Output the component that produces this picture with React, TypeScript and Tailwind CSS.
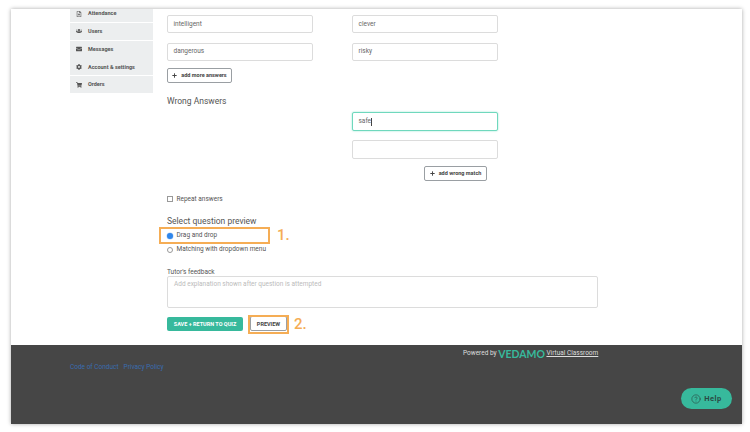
import React from 'react';
import { FaRegFileAlt, FaUsers, FaEnvelope, FaCog, FaShoppingCart, FaPlus } from 'react-icons/fa';
import { CircleHelp } from 'lucide-react';

const navItems = [
  { label: 'Attendance', icon: FaRegFileAlt },
  { label: 'Users', icon: FaUsers },
  { label: 'Messages', icon: FaEnvelope },
  { label: 'Account & settings', icon: FaCog },
  { label: 'Orders', icon: FaShoppingCart },
];

function Field({ value, active, height = 'h-[18px]' }: { value?: string; active?: boolean; height?: string }) {
  return (
    <div
      className={`w-[146px] ${height} rounded-[2px] border bg-white px-[5.5px] pt-px flex items-center text-[6.5px] text-[#666] ${
        active ? 'border-[#6fd8bd] shadow-[0_0_2px_#8fe3cd]' : 'border-[#dcdcdc]'
      }`}
    >
      {value}
      {active && <span className="w-px h-[8px] bg-[#444]" />}
    </div>
  );
}

function OutlineButton({ label, className }: { label: string; className: string }) {
  return (
    <button className={`flex items-center justify-center gap-[4px] rounded-[2px] border border-[#9a9fa3] bg-white text-[5.5px] font-bold text-[#444] ${className}`}>
      <FaPlus size={5} />
      {label}
    </button>
  );
}

export default function App() {
  return (
    <div className="w-[750px] h-[432px] overflow-hidden bg-white pt-[9px] pl-[11px] font-['Roboto',sans-serif]">
      <div className="relative w-[731px] h-[415px] flex flex-col shadow-[0_0_4px_rgba(0,0,0,0.35)]">
        <main className="h-[336px] bg-white flex pl-[59px] overflow-hidden">
          <aside className="w-[83px] -mt-[4px] flex flex-col gap-[0.75px] self-start">
            {navItems.map(({ label, icon: Icon }) => (
              <div key={label} className="h-[17px] bg-[#eceeef] flex items-center pl-[6px] gap-[6px] text-[5.5px] font-bold text-[#555]">
                <Icon size={6} className="shrink-0" />
                {label}
              </div>
            ))}
          </aside>

          <section className="ml-[14px] w-[431px] pt-[6px] flex flex-col">
            <div className="grid grid-cols-[146px_146px] gap-x-[39px] gap-y-[9.5px]">
              <Field value="intelligent" />
              <Field value="clever" />
              <Field value="dangerous" />
              <Field value="risky" />
            </div>
            <OutlineButton label="add more answers" className="mt-[7px] w-[65px] h-[15px]" />

            <h3 className="mt-[12px] text-[8.5px] leading-[12px] text-[#555]">Wrong Answers</h3>
            <div className="ml-[185px] mt-[5px] flex flex-col gap-[9px]">
              <Field value="safe" active height="h-[19px]" />
              <Field height="h-[19px]" />
            </div>
            <OutlineButton label="add wrong match" className="mt-[7px] ml-[257px] w-[63px] h-[15px]" />

            <label className="mt-[14px] flex items-center gap-[3.5px] text-[6.5px] text-[#555]">
              <span className="w-[6px] h-[6px] border border-[#999] bg-white" />
              Repeat answers
            </label>

            <h3 className="mt-[12px] text-[8.5px] leading-[11px] text-[#555]">Select question preview</h3>
            <div className="mt-[4px] flex items-center gap-[3.5px] h-[10px] text-[6.5px] text-[#555]">
              <span className="w-[6px] h-[6px] -mt-px rounded-full bg-[#2f86eb] shadow-[0_0_0_0.5px_#b9d4f5]" />
              Drag and drop
            </div>
            <div className="mt-[4px] flex items-center gap-[3.5px] h-[10px] text-[6.5px] text-[#555]">
              <span className="w-[6px] h-[6px] -mt-px rounded-full border border-[#999] bg-white" />
              Matching with dropdown menu
            </div>

            <label className="mt-[13px] text-[6.5px] leading-[8px] text-[#555]">Tutor's feedback</label>
            <div className="w-[431px] h-[32px] border border-[#dcdcdc] rounded-[2px] px-[6px] pt-[3px] text-[6.5px] text-[#bbb]">
              Add explanation shown after question is attempted
            </div>

            <div className="mt-[8px] flex items-center gap-[7px]">
              <button className="w-[76px] h-[14.5px] rounded-[2px] bg-[#37b99c] text-white text-[5.5px] font-bold">SAVE + RETURN TO QUIZ</button>
              <button className="w-[37px] h-[15px] rounded-[2px] border border-[#9a9fa3] bg-white text-[5.5px] font-bold text-[#444]">PREVIEW</button>
            </div>
          </section>
        </main>

        <footer className="flex-1 bg-[#464646] relative">
          <div className="absolute left-[452px] top-[4px] flex items-center gap-[1.5px] text-[6.5px] text-[#ddd]">
            Powered by
            <span className="text-[10.5px] leading-[10px] font-bold text-[#37b99c] font-['Lato',sans-serif]">VEDAMO</span>
            <span className="underline">Virtual Classroom</span>
          </div>
          <div className="absolute left-[59px] top-[18px] flex gap-[5px] text-[6.5px] text-[#3a6cb0]">
            <span>Code of Conduct</span>
            <span>Privacy Policy</span>
          </div>
          <button className="absolute left-[670px] top-[43px] w-[51px] h-[21px] rounded-[11px] bg-[#37b99c] flex items-center justify-center gap-[3px] text-[7.5px] font-bold text-[#2a4a44] tracking-[0.5px]">
            <CircleHelp size={10} strokeWidth={1.5} />
            Help
          </button>
        </footer>

        {/* annotation marks drawn over the screenshot */}
        <div className="absolute left-[148px] top-[218px] w-[111px] h-[17px] border-2 border-[#f5ad55]" />
        <span className="absolute left-[266px] top-[217px] text-[15px] leading-[18px] font-medium text-[#f5ad55]">1.</span>
        <div className="absolute left-[237px] top-[306px] w-[41px] h-[19px] border-2 border-[#f5ad55]" />
        <span className="absolute left-[283px] top-[306px] text-[15px] leading-[18px] font-medium text-[#f5ad55]">2.</span>
      </div>
    </div>
  );
}
